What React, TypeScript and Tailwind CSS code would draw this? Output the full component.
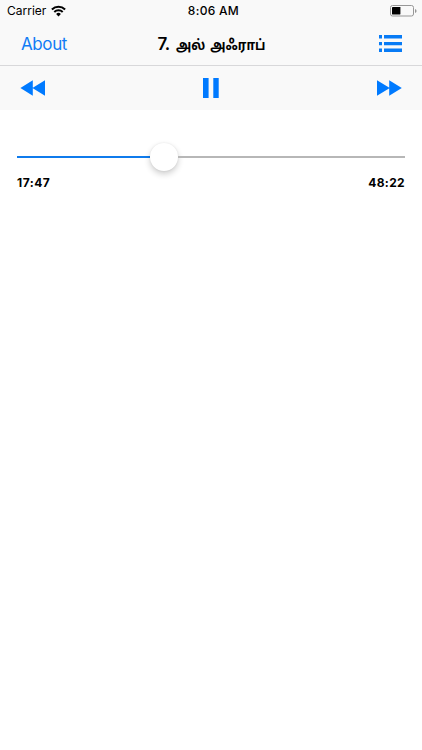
const elapsed = 1067;
const duration = 2902;

function StatusBar() {
  return (
    <div className="grid h-[22px] grid-cols-[1fr_auto_1fr] items-center pl-[7px] pr-[5px] text-black">
      <div className="flex items-center gap-[5px]">
        <span className="text-[12px] leading-[22px]">Carrier</span>
        <svg className="-mt-px" width="15" height="12" viewBox="0 0 15 12" fill="none" stroke="#000">
          <path d="M0.9 4.4a9.6 9.6 0 0 1 13.2 0" strokeWidth="2.1" />
          <path d="M3.3 7a6 6 0 0 1 8.4 0" strokeWidth="2" />
          <path d="M5.1 9a3.4 3.4 0 0 1 4.8 0L7.5 11.4Z" fill="#000" stroke="none" />
        </svg>
      </div>
      <span className="pl-[3px] text-[12px] font-medium leading-[22px] tracking-[0.3px]">8:06 AM</span>
      <svg className="-mt-px justify-self-end" width="27" height="12" viewBox="0 0 27 12">
        <rect x="0.5" y="0.5" width="23" height="10.5" rx="2" fill="none" stroke="#979797" />
        <rect x="2" y="2" width="8.4" height="7.5" rx="0.4" fill="#000" />
        <path d="M25 4v4q1.6-.6 1.6-2T25 4Z" fill="#979797" />
      </svg>
    </div>
  );
}

function NavBar() {
  return (
    <div className="grid h-[44px] grid-cols-[1fr_auto_1fr] items-center border-b border-[#d8d8da] pl-[21px] pr-5">
      <button className="justify-self-start text-[17px] leading-[22px] tracking-[-0.4px] text-[#117cf5]">About</button>
      <h1 className="flex items-baseline gap-[6px] pt-[3px] font-semibold leading-[22px] text-black">
        <span className="text-[17px] tracking-[-0.3px]">7.</span>
        <span className="-translate-y-px scale-y-[1.15] text-[12.5px] font-bold [word-spacing:2px]">அல் அஃராப்</span>
      </h1>
      <button className="justify-self-end" aria-label="List">
        <svg width="23" height="17" viewBox="0 0 23 17" fill="#087bf5">
          <path d="M0 0h3v3.6H0zM5 0h18v3.6H5zM0 6.9h3v3.4H0zM5 6.9h18v3.4H5zM0 13.4h3V17H0zM5 13.4h18V17H5z" />
        </svg>
      </button>
    </div>
  );
}

function Controls() {
  return (
    <div className="grid h-[44px] grid-cols-3 items-center pl-[20px] pr-[20px]">
      <button aria-label="Rewind">
        <svg width="25" height="16" viewBox="0 0 25 16" fill="#007aff">
          <path d="M0.4 8 12.8 0.2v15.6zM12.4 8 25 0.2v15.6z" />
        </svg>
      </button>
      <button className="justify-self-center" aria-label="Pause">
        <svg width="16" height="20" viewBox="0 0 16 20" fill="#007aff">
          <path d="M0 0h5.6v20H0zM10.3 0h5.4v20h-5.4z" />
        </svg>
      </button>
      <button className="justify-self-end" aria-label="Fast forward">
        <svg width="25" height="16" viewBox="0 0 25 16" fill="#007aff">
          <path d="M24.8 8 12.2 0.2v15.6zM12.8 8 0 0.2v15.6z" />
        </svg>
      </button>
    </div>
  );
}

function Progress() {
  const played = (elapsed / duration) * 100;
  return (
    <div className="px-[17px] pt-[32px]">
      <div className="flex h-[29px] items-center">
        <div className="h-[2px] bg-[#0f7bec]" style={{ width: `calc(${played}% - 10.1px)` }} />
        <div className="h-[28px] w-[28px] shrink-0 rounded-full bg-white shadow-[0_3px_6px_rgba(0,0,0,0.2),0_0_2px_rgba(0,0,0,0.08)]" />
        <div className="h-[2px] flex-1 bg-[#b7b7b7]" />
      </div>
      <div className="mt-[3px] flex justify-between text-[12px] font-bold leading-[18px] text-black">
        <span className="tracking-[0.5px]">17:47</span>
        <span className="tracking-[0.35px]">48:22</span>
      </div>
    </div>
  );
}

export default function App() {
  return (
    <div className="min-h-screen bg-white font-[Inter,'Noto_Sans_Tamil','Noto_Sans',sans-serif]">
      <header className="bg-[#f9f9f9]">
        <StatusBar />
        <NavBar />
        <Controls />
      </header>
      <Progress />
    </div>
  );
}
